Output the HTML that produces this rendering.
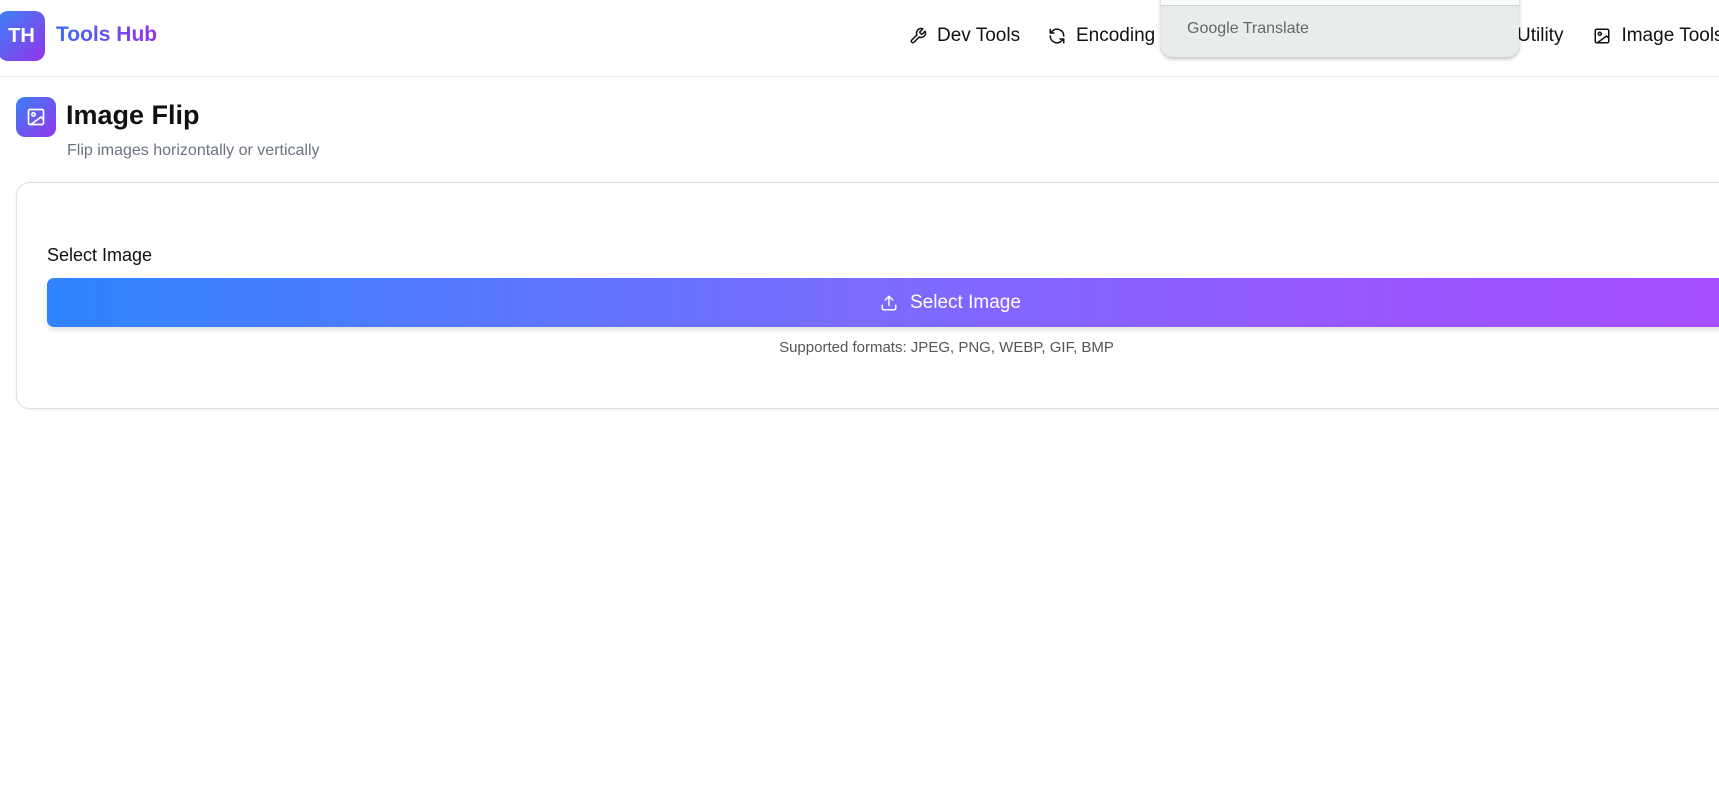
<!DOCTYPE html>
<html><head><meta charset="utf-8"><style>
*{box-sizing:border-box;margin:0;padding:0}
body{width:1719px;height:805px;overflow:hidden;background:#fff;font-family:"Liberation Sans",sans-serif;position:relative;color:#111}
.hdr{position:absolute;left:0;top:0;width:1719px;height:77px;border-bottom:1px solid #e5e7eb}
.logo{position:absolute;left:-2px;top:11px;width:47px;height:50px;border-radius:10px;background:linear-gradient(135deg,#3b82f6,#9333ea);color:#fff;font-weight:bold;font-size:20px;line-height:50px;text-align:center}
.brand{position:absolute;left:56px;top:23px;font-size:21px;font-weight:bold;background:linear-gradient(90deg,#3b6cf6,#9333ea);-webkit-background-clip:text;color:transparent}
.nav{position:absolute;top:25px;font-size:19px;color:#111;display:flex;align-items:center;gap:10px;white-space:nowrap}
.nav svg{width:18px;height:18px}
.gt{position:absolute;left:1161px;top:-5px;width:358px;height:62px;background:#e8ecea;border-radius:0 0 12px 12px;box-shadow:0 2px 4px rgba(0,0,0,.25)}
.gt .w{height:11px;background:#fbfdfc;border-bottom:1px solid #d0d5d3}
.gt span{position:absolute;left:26px;top:25px;font-size:16px;color:#666}
.ib{position:absolute;left:16px;top:97px;width:40px;height:40px;border-radius:9px;background:linear-gradient(135deg,#3b82f6,#9333ea)}
h1{position:absolute;left:66px;top:100px;font-size:27px;font-weight:bold}
.sub{position:absolute;left:67px;top:142px;font-size:16px;color:#6b7280}
.card{position:absolute;left:16px;top:182px;width:1890px;height:227px;border:1px solid #e0e0e0;border-radius:14px;box-shadow:0 1px 3px rgba(0,0,0,.08)}
.lbl{position:absolute;left:47px;top:245px;font-size:18px;color:#111}
.btn{position:absolute;left:47px;top:278px;width:1802px;height:49px;border-radius:7px;background:linear-gradient(90deg,#2f84ff,#7a6cff 45%,#9a55ff 75%,#a94bff);box-shadow:0 3px 6px rgba(0,0,0,.12);color:#fff;font-size:19px}
.btn div{position:absolute;left:833px;top:14px;display:flex;gap:12px;align-items:center}
.fmt{position:absolute;left:0;width:1893px;top:339px;text-align:center;font-size:15px;color:#555}
</style></head><body>
<div class="hdr">
<div class="logo">TH</div>
<div class="brand">Tools Hub</div>
<div class="nav" style="left:909px"><svg viewBox="0 0 24 24" fill="none" stroke="#111" stroke-width="2" stroke-linecap="round" stroke-linejoin="round"><path d="M14.7 6.3a1 1 0 0 0 0 1.4l1.6 1.6a1 1 0 0 0 1.4 0l3.8-3.8a6 6 0 0 1-7.9 7.9l-6.9 6.9a2.1 2.1 0 0 1-3-3l6.9-6.9a6 6 0 0 1 7.9-7.9z"/></svg>Dev Tools</div>
<div class="nav" style="left:1048px"><svg viewBox="0 0 24 24" fill="none" stroke="#111" stroke-width="2" stroke-linecap="round" stroke-linejoin="round"><path d="M21 12a9 9 0 0 0-15-6.7L3 8M3 3v5h5M3 12a9 9 0 0 0 15 6.7l3-2.7M21 21v-5h-5"/></svg>Encoding</div>
<div class="nav" style="left:1517px"><span style="margin-right:20px">Utility</span><svg viewBox="0 0 24 24" fill="none" stroke="#111" stroke-width="2" stroke-linecap="round" stroke-linejoin="round"><rect x="3" y="3" width="18" height="18" rx="2"/><circle cx="9" cy="9" r="2"/><path d="M21 15l-3-3L6 21"/></svg>Image Tools</div>
<div class="gt"><div class="w"></div><span>Google Translate</span></div>
</div>
<div class="ib"><svg viewBox="0 0 24 24" width="20" height="20" style="margin:10px" fill="none" stroke="#fff" stroke-width="2" stroke-linecap="round" stroke-linejoin="round"><rect x="3" y="3" width="18" height="18" rx="2"/><circle cx="9" cy="9" r="2"/><path d="M21 15l-3-3L6 21"/></svg></div>
<h1>Image Flip</h1>
<div class="sub">Flip images horizontally or vertically</div>
<div class="card"></div>
<div class="lbl">Select Image</div>
<div class="btn"><div><svg viewBox="0 0 24 24" width="18" height="18" fill="none" stroke="#fff" stroke-width="2" stroke-linecap="round" stroke-linejoin="round"><path d="M21 15v4a2 2 0 0 1-2 2H5a2 2 0 0 1-2-2v-4M17 8l-5-5-5 5M12 3v12"/></svg>Select Image</div></div>
<div class="fmt">Supported formats: JPEG, PNG, WEBP, GIF, BMP</div>
</body></html>
